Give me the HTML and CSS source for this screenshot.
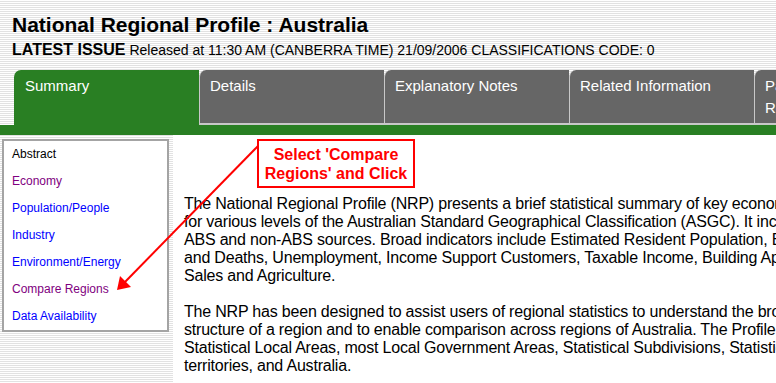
FILE: index.html
```html
<!DOCTYPE html>
<html lang="en">
<head>
    <meta charset="UTF-8">
    <title>National Regional Profile : Australia</title>
    <link rel="stylesheet" href="styles.css">
</head>
<body>
    <div class="header">
        <h1>National Regional Profile : Australia</h1>
        <p class="issue"><strong>LATEST ISSUE</strong> Released at 11:30 AM (CANBERRA TIME) 21/09/2006 CLASSIFICATIONS CODE: 0</p>
    </div>

    <!-- Tab strip -->
    <div class="tabs">
        <div class="tab tab-active">Summary</div>
        <div class="tab">Details</div>
        <div class="tab">Explanatory Notes</div>
        <div class="tab">Related Information</div>
        <div class="tab">Past &amp; Future<br>Releases</div>
    </div>
    <div class="tab-bar"></div>

    <div class="page">
        <div class="side">
            <ul class="side-nav">
                <li class="current">Abstract</li>
                <li><a href="#" class="visited">Economy</a></li>
                <li><a href="#">Population/People</a></li>
                <li><a href="#">Industry</a></li>
                <li><a href="#">Environment/Energy</a></li>
                <li><a href="#" class="visited">Compare Regions</a></li>
                <li><a href="#">Data Availability</a></li>
            </ul>
        </div>

        <div class="content">
            <p>The National Regional Profile (NRP) presents a brief statistical summary of key economic and social information<br>
            for various levels of the Australian Standard Geographical Classification (ASGC). It includes data from<br>
            ABS and non-ABS sources. Broad indicators include Estimated Resident Population, Births<br>
            and Deaths, Unemployment, Income Support Customers, Taxable Income, Building Approvals, Motor Vehicle<br>
            Sales and Agriculture.</p>
            <p>The NRP has been designed to assist users of regional statistics to understand the broad economic and social<br>
            structure of a region and to enable comparison across regions of Australia. The Profile is available for<br>
            Statistical Local Areas, most Local Government Areas, Statistical Subdivisions, Statistical Divisions, states and<br>
            territories, and Australia.</p>
        </div>
    </div>

    <!-- Annotation laid over the page -->
    <div class="callout">Select 'Compare<br>Regions' and Click</div>
    <svg class="arrow" width="776" height="383" viewBox="0 0 776 383">
        <line x1="258" y1="146" x2="124" y2="283" stroke="#f00" stroke-width="2"/>
        <polygon points="117,290 120,276 131,287" fill="#f00"/>
    </svg>
</body>
</html>
```

FILE: styles.css
```css
/* Striped page background */
html, body {
    margin: 0;
    padding: 0;
    height: 100%;
}

body {
    position: relative;
    overflow: hidden;
    font-family: "Liberation Sans", Arial, sans-serif;
    color: #000;
    background: repeating-linear-gradient(to bottom, #fff 0, #fff 1px, #e2e2e2 1px, #e2e2e2 2px);
}

/* Title block */
.header {
    padding: 13px 12px 0;
}

.header h1 {
    margin: 0;
    font-size: 21px;
    line-height: 24px;
    font-weight: bold;
}

.issue {
    margin: 3px 0 10px;
    font-size: 14px;
    line-height: 20px;
    white-space: nowrap;
}

.issue strong {
    font-size: 16px;
}

/* Tabs */
.tabs {
    display: flex;
    margin-left: 14px;
    height: 55px;
}

.tab {
    flex: none;
    width: 185px;
    box-sizing: border-box;
    padding: 5px 10px 0;
    background-color: #666;
    color: #fff;
    font-size: 15px;
    line-height: 22px;
    white-space: nowrap;
    border-left: 1px solid #c8c8c8;
    border-bottom: 2px solid #c8c8c8;
    border-top-left-radius: 7px;
}

.tab-active {
    background-color: #297f23;
    border-left: none;
    border-bottom: none;
    padding-left: 11px;
}

.tab-bar {
    height: 10px;
    background-color: #297f23;
}

/* Left column and body text */
.page {
    display: flex;
    height: 248px;
}

.side {
    flex: none;
    width: 173px;
    box-sizing: border-box;
    padding: 4px 4px 0 2px;
}

.side-nav {
    list-style: none;
    margin: 0;
    padding: 0 0 0 8px;
    background-color: #fff;
    border: 2px solid #a4a4a4;
    font-size: 12px;
    line-height: 27px;
}

.side-nav a {
    color: #0000ff;
    text-decoration: none;
}

.side-nav a.visited {
    color: #800080;
}

.content {
    flex: 1;
    background-color: #fff;
    padding: 60px 0 0 11px;
    font-size: 16px;
    line-height: 18px;
    letter-spacing: -0.2px;
    white-space: nowrap;
}

.content p {
    margin: 0 0 18px;
}

/* Red annotation */
.callout {
    position: absolute;
    left: 257px;
    top: 139px;
    width: 154px;
    padding: 4px 0 3px;
    background-color: #fff;
    border: 2px solid #f00;
    color: #f00;
    font-size: 16px;
    font-weight: bold;
    line-height: 19px;
    text-align: center;
}

.arrow {
    position: absolute;
    left: 0;
    top: 0;
}
```
